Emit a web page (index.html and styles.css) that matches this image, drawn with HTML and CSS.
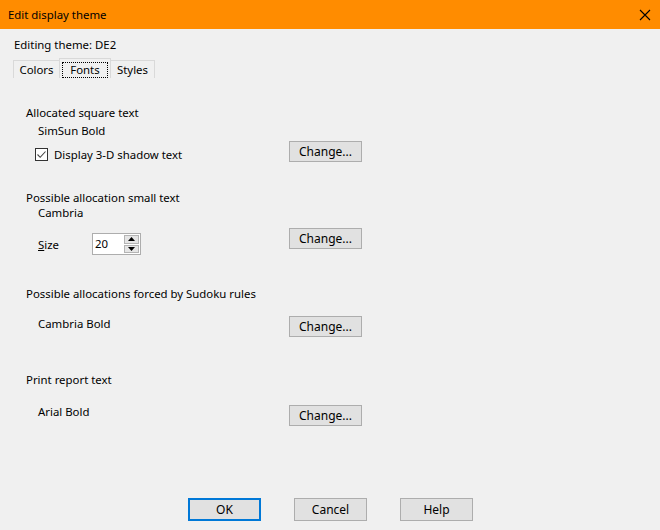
FILE: index.html
```html
<!DOCTYPE html>
<html>
<head>
<meta charset="utf-8">
<link rel="stylesheet" href="styles.css">
</head>
<body>
<div class="dialog">
  <div class="titlebar">
    <span class="title">Edit display theme</span>
    <svg class="close" width="12" height="12" viewBox="0 0 12 12"><path d="M1 1 L11 11 M11 1 L1 11" stroke="#000" stroke-width="1.1" fill="none"/></svg>
  </div>
  <div class="editing">Editing theme: DE2</div>
  <div class="tabs">
    <div class="tab t-colors">Colors</div>
    <div class="tab t-fonts active"><span class="focus">Fonts</span></div>
    <div class="tab t-styles">Styles</div>
  </div>
  <div class="page">
    <div class="section s1">
      <div class="left">
        <div class="head">Allocated square text</div>
        <div class="font f1">SimSun Bold</div>
        <div class="check-row">
          <span class="checkbox"><svg width="11" height="11" viewBox="0 0 11 11"><path d="M1.5 5.5 L4.2 8.3 L9.5 2.5" stroke="#444" stroke-width="1.1" fill="none"/></svg></span>
          <span>Display 3-D shadow text</span>
        </div>
      </div>
      <button class="btn change b1">Change...</button>
    </div>
    <div class="section s2">
      <div class="left">
        <div class="head">Possible allocation small text</div>
        <div class="font f2">Cambria</div>
        <div class="size-row">
          <span class="size-label"><u>S</u>ize</span>
          <span class="spin">
            <span class="spin-val">20</span>
            <span class="spin-btns">
              <span class="sb up"><svg width="7" height="4" viewBox="0 0 7 4"><path d="M3.5 0 L7 4 L0 4 Z" fill="#000"/></svg></span>
              <span class="sb down"><svg width="7" height="4" viewBox="0 0 7 4"><path d="M0 0 L7 0 L3.5 4 Z" fill="#000"/></svg></span>
            </span>
          </span>
        </div>
      </div>
      <button class="btn change b2">Change...</button>
    </div>
    <div class="section s3">
      <div class="left">
        <div class="head">Possible allocations forced by Sudoku rules</div>
        <div class="font f3">Cambria Bold</div>
      </div>
      <button class="btn change b3">Change...</button>
    </div>
    <div class="section s4">
      <div class="left">
        <div class="head">Print report text</div>
        <div class="font f4">Arial Bold</div>
      </div>
      <button class="btn change b4">Change...</button>
    </div>
  </div>
  <div class="footer">
    <button class="btn foot default">OK</button>
    <button class="btn foot">Cancel</button>
    <button class="btn foot">Help</button>
  </div>
</div>
</body>
</html>
```

FILE: styles.css
```css
* { box-sizing: border-box; }
html, body {
  margin: 0;
  padding: 0;
  background: #f0f0f0;
}
body {
  font-family: "Noto Sans", "Open Sans", sans-serif;
  font-size: 11.4px;
  color: #000;
}
.dialog {
  width: 660px;
  height: 530px;
  background: #f0f0f0;
  position: relative;
}
.titlebar {
  height: 29px;
  background: #ff8c00;
  display: flex;
  align-items: center;
  justify-content: space-between;
  padding: 0 8px 0 8px;
}
.title { line-height: 29px; }
.close { margin-right: 1px; }
.editing {
  margin-top: 8px;
  padding-left: 14px;
  line-height: 15px;
  height: 15px;
}
.tabs {
  margin-top: 6px;
  padding-left: 13px;
  display: flex;
  align-items: flex-end;
  height: 20px;
}
.tab {
  border: 1px solid #d9d9d9;
  border-bottom: none;
  height: 18px;
  line-height: 18px;
  text-align: center;
}
.t-colors { width: 46px; border-right: none; }
.t-fonts { width: 52px; height: 20px; padding-top: 2px; }
.t-styles { width: 44px; border-left: none; }
.focus {
  display: inline-block;
  border: 1px dotted #000;
  width: 46px;
  height: 16px;
  line-height: 13px;
}
.page {
  padding-left: 26px;
}
.section {
  display: flex;
  align-items: flex-start;
}
.left {
  width: 263px;
}
.head { line-height: 15px; height: 15px; }
.font { padding-left: 12px; line-height: 15px; height: 15px; }
.s1 { margin-top: 27px; }
.s1 .head { line-height: 16px; height: 16px; }
.f1 { margin-top: 2px; line-height: 16px; height: 16px; }
.check-row {
  margin-top: 7px;
  padding-left: 9px;
  display: flex;
  align-items: center;
  gap: 6px;
  height: 16px;
}
.checkbox {
  width: 13px;
  height: 13px;
  border: 1px solid #333;
  background: #fff;
  display: flex;
  align-items: center;
  justify-content: center;
}
.btn {
  font-family: inherit;
  font-size: 12px;
  background: #e1e1e1;
  border: 1px solid #adadad;
  color: #000;
  padding: 0;
  margin: 0;
}
.change {
  width: 73px;
  height: 21px;
}
.b1 { margin-top: 36px; }
.s2 { margin-top: 28px; }
.size-row {
  margin-top: 13px;
  padding-left: 12px;
  display: flex;
  align-items: center;
  height: 22px;
}
.size-label { width: 54px; }
.spin {
  width: 49px;
  height: 22px;
  border: 1px solid #adadad;
  background: #fff;
  display: flex;
  align-items: center;
  justify-content: space-between;
  padding: 1px 1px 1px 2px;
}
.spin-val { line-height: 18px; }
.spin-btns {
  display: flex;
  flex-direction: column;
  gap: 1px;
  height: 18px;
  width: 15px;
}
.sb {
  flex: 1;
  background: #e5e5e5;
  border: 1px solid #b4b4b4;
  display: flex;
  align-items: center;
  justify-content: center;
}
.b2 { margin-top: 38px; }
.s3 { margin-top: 31px; }
.f3 { margin-top: 15px; }
.b3 { margin-top: 30px; }
.s4 { margin-top: 35px; }
.f4 { margin-top: 17px; }
.b4 { margin-top: 33px; }
.footer {
  position: absolute;
  left: 188px;
  top: 498px;
  display: flex;
  gap: 33px;
}
.foot {
  width: 73px;
  height: 23px;
}
.default {
  border: 2px solid #0078d7;
}
```
